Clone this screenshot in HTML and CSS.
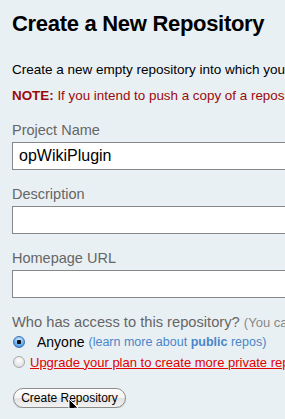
FILE: index.html
```html
<!DOCTYPE html>
<html lang="en">
<head>
    <meta charset="UTF-8">
    <title>Create a New Repository</title>
    <link rel="stylesheet" href="styles.css">
</head>
<body>
    <div class="page">
        <h1>Create a New Repository</h1>

        <p class="intro">Create a new empty repository into which you can push your local git repository.</p>
        <p class="note"><strong>NOTE:</strong> If you intend to push a copy of a repository that is already hosted on GitHub, then you should fork it instead.</p>

        <div class="field">
            <label>Project Name</label>
            <input type="text" class="text-input" value="opWikiPlugin">
        </div>

        <div class="field">
            <label>Description</label>
            <input type="text" class="text-input">
        </div>

        <div class="field">
            <label>Homepage URL</label>
            <input type="text" class="text-input">
        </div>

        <div class="access">
            <div class="access-title">Who has access to this repository? <span class="hint">(You can change this later)</span></div>
            <div class="radio-row">
                <span class="radio checked"></span>
                <span class="radio-label">Anyone</span>
                <span class="learn">(learn more about <b>public</b> repos)</span>
            </div>
            <div class="radio-row">
                <span class="radio"></span>
                <a href="#" class="upgrade">Upgrade your plan to create more private repositories!</a>
            </div>
        </div>

        <div class="actions">
            <button type="button" class="create-btn">Create Repository</button>
            <svg class="cursor" width="12" height="18" viewBox="0 0 12 18">
                <path d="M1 1 L1 14 L4 11 L6.5 16.5 L8.5 15.5 L6 10.2 L10.2 10.2 Z" fill="#000" stroke="#fff" stroke-width="1"/>
            </svg>
        </div>
    </div>
</body>
</html>
```

FILE: styles.css
```css
* {
    margin: 0;
    padding: 0;
    box-sizing: border-box;
}

body {
    font-family: 'Liberation Sans', Arial, Helvetica, sans-serif;
    background: #e9f0f4;
    overflow: hidden;
}

.page {
    padding: 10px 0 0 12px;
    white-space: nowrap;
}

h1 {
    font-size: 22px;
    line-height: 28px;
    font-weight: bold;
    letter-spacing: -0.3px;
    color: #000;
}

.intro {
    margin-top: 24px;
    font-size: 13.5px;
    line-height: 16px;
    color: #000;
}

.note {
    margin-top: 10px;
    font-size: 13.4px;
    line-height: 16px;
    color: #9a0b0b;
}

.note strong {
    font-weight: bold;
}

.field {
    margin-top: 18px;
}

.field + .field {
    margin-top: 16px;
}

.field label {
    display: block;
    font-size: 14.5px;
    line-height: 17px;
    color: #666;
    margin-bottom: 3px;
}

.text-input {
    display: block;
    width: 400px;
    height: 28px;
    border: 1px solid #888;
    background: #fff;
    padding: 0 6px;
    font-family: 'Liberation Sans', Arial, sans-serif;
    font-size: 16px;
    color: #000;
    outline: none;
}

.access {
    margin-top: 15px;
}

.access-title {
    font-size: 14.7px;
    line-height: 18px;
    color: #666;
}

.hint {
    font-size: 13px;
    color: #888;
}

.radio-row {
    display: flex;
    align-items: center;
    height: 20px;
    padding-left: 1px;
}

.radio {
    display: inline-block;
    width: 12px;
    height: 12px;
    border-radius: 50%;
    border: 1px solid #a9a9a9;
    background: radial-gradient(circle at 50% 35%, #ffffff 0%, #e6e6e6 60%, #cfcfcf 100%);
    flex-shrink: 0;
}

.radio.checked {
    border-color: #3d6fb0;
    background: radial-gradient(circle at 50% 50%, #111 0, #111 2px, transparent 2.5px),
                radial-gradient(circle at 50% 30%, #d5ecff 0%, #6cb0f0 55%, #2f7ad6 100%);
}

.radio-label {
    margin-left: 12px;
    font-size: 14px;
    color: #000;
}

.learn {
    margin-left: 4px;
    font-size: 12.5px;
    color: #4a86c8;
}

.learn b {
    font-weight: bold;
}

.upgrade {
    margin-left: 5px;
    font-size: 13px;
    color: #e00000;
    text-decoration: underline;
}

.actions {
    position: relative;
    margin-top: 16px;
    padding-left: 1px;
}

.create-btn {
    width: 113px;
    height: 20px;
    border: 1px solid #8c8c8c;
    border-radius: 10px;
    background: linear-gradient(#ffffff 0%, #f4f4f4 50%, #e2e2e2 51%, #f2f2f2 100%);
    font-family: 'Liberation Sans', Arial, sans-serif;
    font-size: 12px;
    color: #000;
    box-shadow: 0 1px 1px rgba(0,0,0,0.15);
}

.cursor {
    position: absolute;
    left: 56px;
    top: 10px;
}
```
